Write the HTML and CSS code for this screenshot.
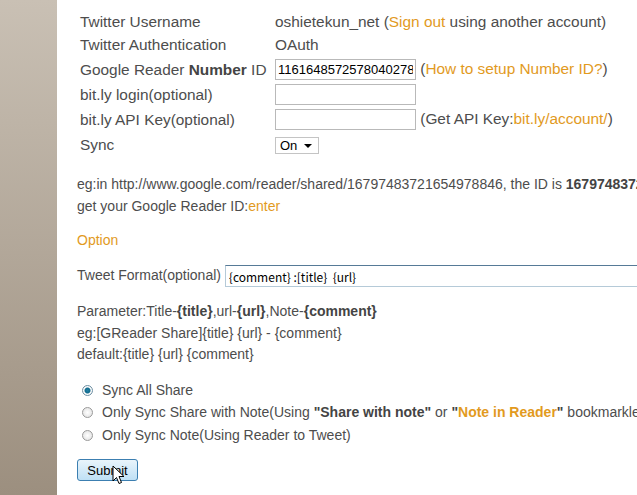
FILE: index.html
```html
<!DOCTYPE html>
<html lang="en">
<head>
    <meta charset="UTF-8">
    <title>Settings</title>
    <link rel="stylesheet" href="styles.css">
</head>
<body>
    <div class="side"></div>
    <div class="main">
        <table class="account">
            <tr class="r1"><td class="lbl">Twitter Username</td><td>oshietekun_net (<a href="#">Sign out</a> using another account)</td></tr>
            <tr class="r2"><td class="lbl">Twitter Authentication</td><td>OAuth</td></tr>
            <tr><td class="lbl">Google Reader <b>Number</b> ID</td><td><input type="text" class="txt" value="11616485725780402781"> (<a href="#">How to setup Number ID?</a>)</td></tr>
            <tr><td class="lbl">bit.ly login(optional)</td><td><input type="text" class="txt"></td></tr>
            <tr><td class="lbl">bit.ly API Key(optional)</td><td><input type="text" class="txt"> (Get API Key:<a href="#">bit.ly/account/</a>)</td></tr>
            <tr class="r6"><td class="lbl">Sync</td><td><span class="sel">On <i class="arrow"></i></span></td></tr>
        </table>

        <p class="note">eg:in http://www.google.com/reader/shared/16797483721654978846, the ID is <b>16797483721654978846</b><br>
        get your Google Reader ID:<a href="#">enter</a></p>

        <h4 class="option">Option</h4>

        <div class="format">Tweet Format(optional) <input type="text" class="fmt" value="{comment} :[title}  {url}"></div>

        <p class="note params">Parameter:Title-<b>{title}</b>,url-<b>{url}</b>,Note-<b>{comment}</b><br>
        eg:[GReader Share]{title} {url} - {comment}<br>
        default:{title} {url} {comment}</p>

        <div class="radios">
            <label><span class="radio on"></span>Sync All Share</label>
            <label><span class="radio"></span>Only Sync Share with Note(Using <b>"Share with note"</b> or <b>"<a href="#">Note in Reader</a>"</b> bookmarklet)</label>
            <label><span class="radio"></span>Only Sync Note(Using Reader to Tweet)</label>
        </div>

        <button class="submit">Submit</button>
        <svg class="cursor" width="13" height="20" viewBox="0 0 13 20"><path d="M1 1 L1 16 L4.5 12.5 L7 18.5 L9.5 17.5 L7 11.5 L12 11.5 Z" fill="#fff" stroke="#000" stroke-width="1"/></svg>
    </div>
</body>
</html>
```

FILE: styles.css
```css
body { margin: 0; display: flex; min-height: 495px; background: #fff; font-family: 'Liberation Sans', Arial, sans-serif; color: #4d4d4d; overflow: hidden; }
a { color: #e29a1e; text-decoration: none; }
.side { width: 57px; flex-shrink: 0; background: linear-gradient(#c9c0b4, #9c8f7f); }
.main { flex: 1; padding: 10px 0 0 20px; position: relative; white-space: nowrap; }

.account { border-collapse: collapse; font-size: 15.4px; }
.account td { padding: 0 3px; height: 25px; }
.account .r1 td { height: 23px; }
.account .r2 td { height: 24px; }
.account .r6 td { height: 26px; }
.account .lbl { width: 195px; padding-right: 0; }
.account td + td { padding-left: 0; }
.account b { color: #444; }
.txt { width: 135px; height: 17px; padding: 1px 2px; border: 1px solid #b9b9b9; font: 13px 'Liberation Sans', Arial, sans-serif; color: #000; vertical-align: middle; margin: 0; }
.sel { display: inline-block; width: 38px; height: 15px; border: 1px solid #c4c4c4; padding: 0 0 0 4px; font-size: 13px; color: #000; line-height: 15px; position: relative; vertical-align: middle; }
.arrow { position: absolute; right: 6px; top: 6px; border-left: 4px solid transparent; border-right: 4px solid transparent; border-top: 4px solid #000; }

.note { font-size: 14px; line-height: 21.5px; margin: 16px 0 0 0; }
.note b { color: #444; }
.note.params { margin-top: 14px; }
.option { font-size: 14px; font-weight: normal; color: #e29a1e; margin: 15px 0 0 0; }
.format { font-size: 14px; margin-top: 17px; }
.fmt { width: 420px; height: 18px; padding: 1px 3px; border: 1px solid #b5cad8; border-top-color: #567a97; font: 12px 'Noto Sans CJK JP', sans-serif; color: #000; margin: 0; vertical-align: middle; }

.radios { margin-top: 13px; font-size: 14px; padding-left: 5px; }
.radios label { display: block; height: 22.5px; line-height: 22.5px; }
.radios b { color: #444; }
.radios b a { color: #e29a1e; }
.radio { display: inline-block; width: 11px; height: 11px; border-radius: 50%; border: 1px solid #9a9a9a; background: radial-gradient(#fff, #ddd); margin-right: 9px; box-sizing: border-box; vertical-align: -1px; }
.radio.on { background: radial-gradient(circle, #1f7fa4 0, #126b8d 2.5px, #fff 3.5px, #e4e4e4 100%); border-color: #6d8fa3; }

.submit { margin-top: 13px; width: 61px; height: 22px; border: 1px solid #3c7fb1; border-radius: 3px; background: linear-gradient(#e9f4fb, #bfe0f5); font: 13px 'Liberation Sans', Arial, sans-serif; color: #000; padding: 0; }
.cursor { position: absolute; left: 55px; top: 465px; }
```
